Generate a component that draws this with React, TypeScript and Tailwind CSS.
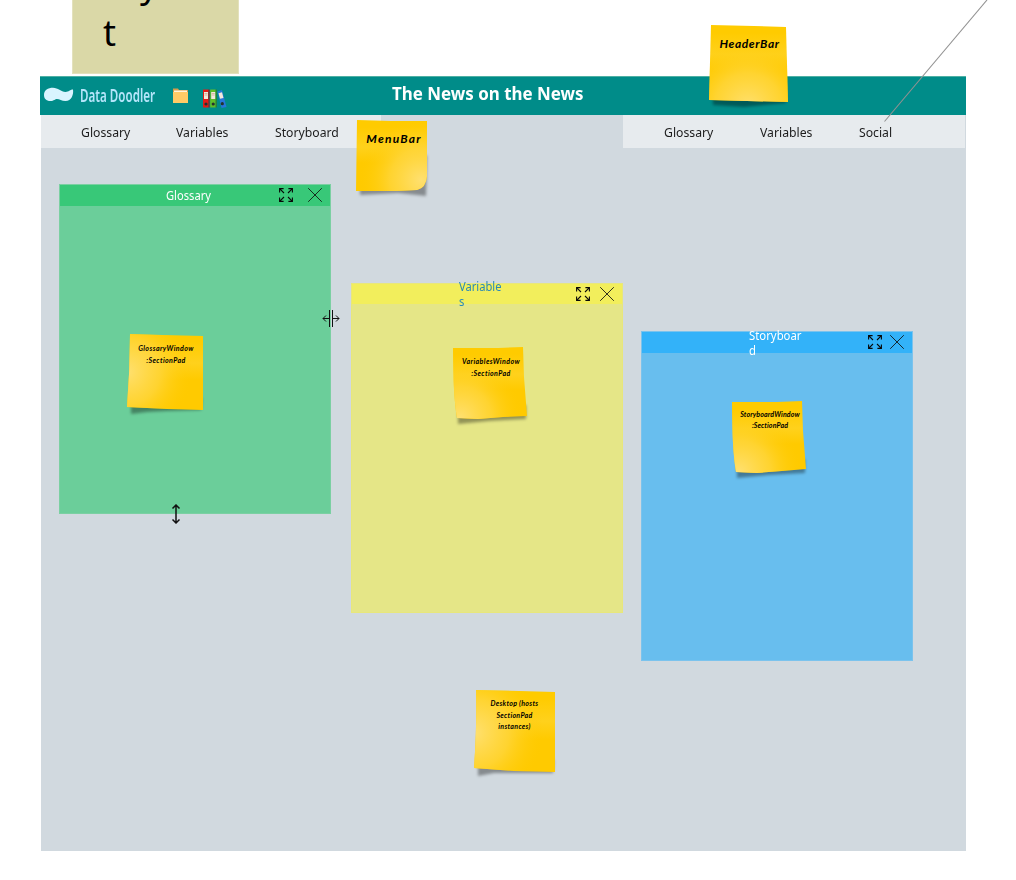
import type { ReactNode } from "react";

const ui = "font-['Noto_Sans','Open_Sans',sans-serif]";

function ExpandIcon() {
  return (
    <svg className="shrink-0" width="14" height="14" viewBox="0 0 14 14" fill="none" stroke="#080808" strokeWidth="1.1">
      <path d="M.6 4.600V.6H4.600M.6.6 5 5M9.400.6h4v4M13.400.6 9 5M.6 9.400v4h4M.6 13.400 5 9M13.400 9.400v4H9.400M13.400 13.400 9 9" />
    </svg>
  );
}

function CloseIcon() {
  return (
    <svg className="shrink-0" width="14" height="14" viewBox="0 0 14 14" stroke="#111" strokeOpacity=".85" strokeWidth="1">
      <path d="M.2.2 13.800 13.800M13.800.2.2 13.800" />
    </svg>
  );
}

type NoteProps = {
  id: string;
  className: string;
  width: number;
  height: number;
  outline: string;
  shadow: string;
  glow: [number, number];
  children: ReactNode;
};

function Note({ id, className, width, height, outline, shadow, glow, children }: NoteProps) {
  return (
    <div className={`absolute text-center whitespace-nowrap text-black italic font-bold font-['Lato','Noto_Sans',sans-serif] ${className}`}>
      <svg className="absolute top-0 left-0 overflow-visible" width={width} height={height}>
        <defs>
          <radialGradient id={`${id}-glow`} gradientUnits="userSpaceOnUse" cx={glow[0]} cy={glow[1]} r={width * 0.85}>
            <stop offset="0" stopColor="#ffe070" />
            <stop offset=".5" stopColor="#ffd63c" stopOpacity=".8" />
            <stop offset="1" stopColor="#ffcb00" stopOpacity="0" />
          </radialGradient>
          <linearGradient id={`${id}-band`} x2="0" y2="1">
            <stop offset=".1" stopColor="#ffcb00" />
            <stop offset=".38" stopColor="#ffd11c" />
            <stop offset=".6" stopColor="#ffca00" />
          </linearGradient>
          <filter id={`${id}-blur`} x="-20%" y="-20%" width="140%" height="150%">
            <feGaussianBlur stdDeviation="1.8" />
          </filter>
        </defs>
        <path d={shadow} fill="#000" fillOpacity=".36" filter={`url(#${id}-blur)`} />
        <path d={outline} fill={`url(#${id}-band)`} />
        <path d={outline} fill={`url(#${id}-glow)`} />
      </svg>
      <span className="relative">{children}</span>
    </div>
  );
}

type PadProps = { className: string; bar: string; title: string; titleClass: string; tools: string };

function Pad({ className, bar, title, titleClass, tools }: PadProps) {
  return (
    <section className={`absolute w-[272px] border ${className}`}>
      <div className={`flex items-center ${bar}`}>
        <h2 className={`shrink-0 origin-left text-[12px] break-all ${titleClass}`}>{title}</h2>
        <div className={`ml-auto flex items-center ${tools}`}>
          <ExpandIcon />
          <CloseIcon />
        </div>
      </div>
    </section>
  );
}

function Menu({ className, items }: { className: string; items: string[] }) {
  return (
    <div className={`grid bg-[#e7ebee] ${className}`}>
      {items.map((item) => (
        <span key={item} className="origin-left scale-x-[.94]">{item}</span>
      ))}
    </div>
  );
}

export default function App() {
  return (
    <div className={`relative flex h-[880px] w-[1016px] flex-col overflow-hidden bg-white text-[#1c1c1c] ${ui}`}>
      <div className="ml-[72px] h-[74px] w-[167px] shrink-0 overflow-hidden border border-t-0 border-[#e3e1bd] bg-[#dad8a7] pl-[30px] text-[36px] leading-[43px] text-black">
        <div className="-mt-[38px] pl-[37px]">y</div>
        <div className="mt-[6px]">t</div>
      </div>

      <header className="mt-[2px] ml-[40px] flex h-[39px] w-[926px] shrink-0 items-center border-t border-[#4fb0a4] bg-[#008c89] pb-[2px] pl-[4px]">
        <svg className="shrink-0" width="30" height="16" viewBox="0 0 30 16">
          <path d="M0 8C0 3 4 .8 9 .8c5 0 8 4.200 12.500 4.200C25 5 26 2.500 29 2.600c.8 5-1.500 11.500-7.500 11.500-4 0-6-2-8.500-2-2 0-3 2-6.500 2C2 14 0 11.500 0 8Z" fill="#d9f4ff" />
        </svg>
        <span className="ml-[6px] w-[75px] shrink-0 text-[18px] leading-[24px] whitespace-nowrap text-[#b5e5fa]">
          <span className="inline-block origin-left scale-x-[.645] font-semibold">Data Doodler</span>
        </span>
        <svg className="mt-px ml-[17px] shrink-0" width="17" height="16" viewBox="0 0 17 16">
          <path d="M1 .5h5l1 1.500h9V6H1Z" fill="#d79b4a" />
          <path d="M2 2.500h13V5H2Z" fill="#fff4dc" />
          <path d="M1 4h15V15H1Z" fill="#ffcb66" />
        </svg>
        <svg className="mt-[6px] ml-[13px] shrink-0" width="25" height="21" viewBox="0 0 25 21">
          <path d="M1 1.500h5.500V19.500H1Z" fill="#e51b16" />
          <path d="M6.500 1.500H7.500V19.500h-1Z" fill="#a31110" />
          <path d="M8.200 1.500h5.500V19.500H8.200Z" fill="#60be29" />
          <path d="M13.700 1.500h1V19.500h-1Z" fill="#397e1b" />
          <path d="m15.500 3.500 4.500-1.400 4.500 17-5 1Z" fill="#2677d9" />
          <path d="M2 4h4v7H2ZM9.200 4h4v7h-4ZM16.500 5.200l3.500-1 1.500 5.800-3.500.8Z" fill="#f3e8dc" />
          <path d="M2.500 5.500h3M2.500 7h3M9.700 5.500h3M9.700 7h3" stroke="#c9a385" strokeWidth=".7" />
          <g fill="#26312e"><circle cx="4" cy="16" r="1.600" /><circle cx="11.200" cy="16" r="1.600" /><circle cx="20.300" cy="15.700" r="1.600" /></g>
        </svg>
        <h1 className="-mt-[4px] ml-[165px] origin-left scale-x-[.94] text-[18px] leading-[27px] font-bold whitespace-nowrap text-white">
          The News on the News
        </h1>
      </header>

      <main className="relative ml-[41px] h-[736px] w-[925px] shrink-0 bg-[#d1d9df]">
        <nav className="flex h-[33px] justify-between pr-px text-[13px] leading-[35px]">
          <Menu className="w-[340px] grid-cols-[95px_99px_80px] pl-[39.500px]" items={["Glossary", "Variables", "Storyboard"]} />
          <Menu className="w-[342px] grid-cols-[96px_99px_60px] pl-[40.500px]" items={["Glossary", "Variables", "Social"]} />
        </nav>

        <Pad className="top-[69px] left-[17.500px] h-[330px] border-[#7bd0a2] bg-[#6bce9a]" bar="h-[21px] bg-[#38c878] pl-[106px]" title="Glossary" titleClass="scale-x-[.93] leading-[20px] text-white" tools="gap-[15px] pr-[8px] pb-px" />
        <Pad className="top-[168px] left-[310px] h-[330px] border-[#e8e77b] bg-[#e5e687]" bar="h-[20px] bg-[#f2ee5c] pl-[107px]" title="Variables" titleClass="w-[48px] scale-x-[.93] leading-[15px] text-[#2788b9]" tools="gap-[10px] pr-[8px]" />
        <Pad className="top-[216px] left-[599.500px] h-[330px] border-[#7bc3ed] bg-[#68beee]" bar="h-[21px] bg-[#33b2f9] pl-[107px]" title="Storyboard" titleClass="w-[59px] scale-x-[.945] leading-[15px] text-white" tools="gap-[8px] pr-[8px] pb-px" />
      </main>

      <svg className="absolute top-[310px] left-[322px]" width="18" height="17" viewBox="0 0 18 17" fill="none" stroke="#111">
        <path d="M7.500 0v17M10.500 0v17M7 8.500H1M4 5.500l-3 3 3 3M11 8.500h6M14 5.500l3 3-3 3" />
      </svg>
      <svg className="absolute top-[504px] left-[171px]" width="10" height="20" viewBox="0 0 10 20" fill="none" stroke="#111" strokeWidth="1.500">
        <path d="M5 1v18M1.500 4.500 5 1l3.500 3.500M1.500 15.500 5 19l3.500-3.500" />
      </svg>

      <Note id="header" className="top-[25px] left-[709px] w-[81px] pt-[10px] text-[12px] leading-[17px] tracking-[0.6px]" width={80} height={78} glow={[39, 82]} outline="M2 0 45 1 77 2 79 77 38 76 0 75Z" shadow="M3 65 76 63 77 78 35 82 4 80Z">HeaderBar</Note>
      <Note id="menu" className="top-[120px] left-[356px] w-[76px] pt-[10px] text-[12px] leading-[17px] tracking-[1.2px]" width={73} height={74} glow={[65, 60]} outline="M1 0 35 1 71 1 71 56Q70 68 61 70L40 71 0 71Z" shadow="M4 62 71 35 70 76 42 73 4 75Z">MenuBar</Note>
      <Note id="glossary" className="top-[334px] left-[127px] w-[78px] pt-[8px] text-[7px] leading-[12px] tracking-[0.4px]" width={77} height={76} glow={[0, 38]} outline="M3 0 35 1 76 2 76 76 40 75 0 73Q3 36 3 0Z" shadow="M4 62 75 64 74 76 40 77 20 78 4 80Z">GlossaryWindow<br />:SectionPad</Note>
      <Note id="variables" className="top-[347px] left-[453px] w-[76px] pt-[8px] text-[7px] leading-[12px] tracking-[0.42px]" width={74} height={72} glow={[7, 71]} outline="M0 1 45 1 70 0 71 30 74 69 50 70 25 72 4 71Q0 48 0 1Z" shadow="M5 62 73 58 73 72 36 74 5 77Z">VariablesWindow<br />:SectionPad</Note>
      <Note id="storyboard" className="top-[401px] left-[732px] w-[76px] pt-[8px] text-[7px] leading-[11px] tracking-[0.12px]" width={74} height={72} glow={[7, 71]} outline="M0 1 45 1 70 0 71 30 74 68 50 70 25 72 4 71Q0 48 0 1Z" shadow="M5 62 73 58 73 72 36 74 5 77Z">StoryboardWindow<br />:SectionPad</Note>
      <Note id="desktop" className="top-[690px] left-[474px] w-[81px] pt-[8px] text-[7px] leading-[11.5px] tracking-[0.3px]" width={82} height={82} glow={[0, 43]} outline="M2 0 45 1 81 2 81 82 40 81 0 78Q3 36 2 0Z" shadow="M4 68 80 70 79 83 40 83 20 83 4 86Z">Desktop (hosts<br />SectionPad<br />instances)</Note>

      <svg className="absolute top-0 left-[880px]" width="110" height="124" viewBox="0 0 110 124" fill="none">
        <path d="M4.500 121.500 107 0" stroke="#929292" strokeWidth="1.100" />
      </svg>
    </div>
  );
}
